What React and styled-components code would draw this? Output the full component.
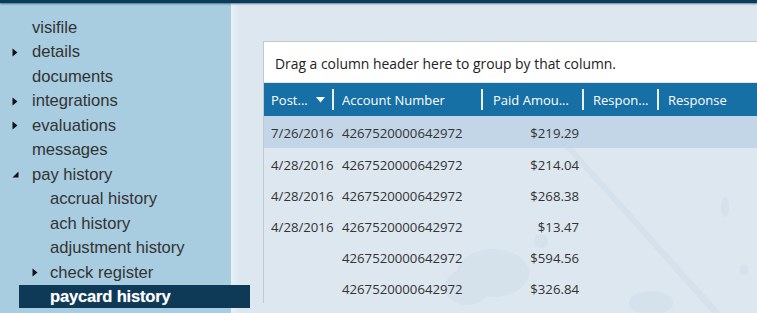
import React from "react";
import styled, { createGlobalStyle } from "styled-components";

const GlobalStyle = createGlobalStyle`
  html, body { margin: 0; padding: 0; overflow: hidden; }
  body { background: #dde7f0; }
  * { box-sizing: border-box; }
`;

const Page = styled.div`
  width: 757px;
  height: 313px;
  display: flex;
  flex-direction: column;
  overflow: hidden;
  position: relative;
`;

const TopBar = styled.div`
  height: 3px;
  flex: none;
  background: #0c3a5a;
  box-shadow: 0 1px 2px rgba(10, 40, 70, 0.55);
  position: relative;
  z-index: 2;
`;

const Body = styled.div`
  flex: 1;
  display: flex;
  min-height: 0;
`;

const Sidebar = styled.nav`
  width: 231px;
  flex: none;
  background: #a8cce0;
  padding-top: 12.5px;
  position: relative;
  z-index: 1;
  font-family: "Liberation Sans", Arial, sans-serif;
  font-size: 16.6px;
  color: #333;
`;

const Item = styled.div`
  height: 24.5px;
  display: flex;
  align-items: center;
  padding-left: ${(p) => (p.$level ? 32 : 12)}px;
  white-space: nowrap;
`;

const SelectedItem = styled(Item)`
  margin-left: 19px;
  width: 231px;
  padding-left: 13px;
  background: #0e3a57;
  color: #fff;
  font-weight: bold;
  text-shadow: 0 0 1px rgba(255, 255, 255, 0.4);
  height: 23px;
  margin-top: 0px;
  letter-spacing: -0.2px;
`;

const Toggle = styled.span`
  width: ${(p) => (p.$level ? 18 : 20)}px;
  flex: none;
  display: flex;
  align-items: center;
`;

const Main = styled.main`
  flex: 1;
  position: relative;
  padding: 38px 0 0 32px;
  background: linear-gradient(to right, #e9f0f6 0px, #dde7f0 9px, #dde7f0 100%);
  min-width: 0;
`;

const Watermark = styled.svg`
  position: absolute;
  left: 0;
  top: 0;
  width: 526px;
  height: 310px;
  pointer-events: none;
`;

const Grid = styled.div`
  position: relative;
  width: 520px;
  border-left: 1px solid #c6c9cc;
  border-top: 1px solid #c6c9cc;
  font-family: "Open Sans", "Segoe UI", sans-serif;
`;

const GroupPanel = styled.div`
  height: 41px;
  background: #fff;
  border-bottom: 1px solid #e4e4e4;
  display: flex;
  align-items: center;
  padding: 2px 0 0 11px;
  font-size: 13.9px;
  color: #222;
`;

const HeaderRow = styled.div`
  height: 33px;
  background: #166fa5;
  display: flex;
  color: #fff;
  font-size: 13px;
  padding-top: 1px;
`;

const HeaderCell = styled.div`
  position: relative;
  width: ${(p) => p.$w}px;
  flex: none;
  display: flex;
  align-items: center;
  padding-left: ${(p) => p.$pl}px;
  white-space: nowrap;
  overflow: hidden;
  &::before {
    content: "";
    display: ${(p) => (p.$first ? "none" : "block")};
    position: absolute;
    left: 0;
    top: 5px;
    bottom: 6px;
    width: 1.5px;
    background: rgba(255, 255, 255, 0.9);
  }
`;

const SortArrow = styled.svg`
  margin-left: 8px;
  flex: none;
`;

const Row = styled.div`
  height: ${(p) => (p.$selected ? 32 : 31)}px;
  display: flex;
  align-items: center;
  padding-top: 2px;
  background: ${(p) => (p.$selected ? "#c3d6e8" : "transparent")};
  font-size: 13.2px;
  color: #333;
  position: relative;
`;

const Cell = styled.div`
  width: ${(p) => p.$w}px;
  flex: none;
  padding-left: ${(p) => p.$pl || 0}px;
  padding-right: ${(p) => p.$pr || 0}px;
  text-align: ${(p) => p.$align || "left"};
  white-space: nowrap;
`;

const RightTri = () => (
  <svg width="6" height="9" viewBox="0 0 6 9">
    <path d="M0.5 0.5 L5.5 4.5 L0.5 8.5 Z" fill="#111" />
  </svg>
);

const DownTri = () => (
  <svg width="7" height="7" viewBox="0 0 7 7">
    <path d="M6.5 0.5 L6.5 6.5 L0.5 6.5 Z" fill="#111" />
  </svg>
);

const nav = [
  { label: "visifile", level: 0 },
  { label: "details", level: 0, toggle: "closed" },
  { label: "documents", level: 0 },
  { label: "integrations", level: 0, toggle: "closed" },
  { label: "evaluations", level: 0, toggle: "closed" },
  { label: "messages", level: 0 },
  { label: "pay history", level: 0, toggle: "open" },
  { label: "accrual history", level: 1 },
  { label: "ach history", level: 1 },
  { label: "adjustment history", level: 1 },
  { label: "check register", level: 1, toggle: "closed" },
  { label: "paycard history", level: 1, selected: true },
];

const cols = [
  { w: 68, pl: 7, label: "Post...", sort: true },
  { w: 149, pl: 10, label: "Account Number" },
  { w: 101, pl: 12, label: "Paid Amou..." },
  { w: 75, pl: 11, label: "Respon..." },
  { w: 127, pl: 11, label: "Response" },
];

const rows = [
  { date: "7/26/2016", acct: "4267520000642972", amt: "$219.29", selected: true },
  { date: "4/28/2016", acct: "4267520000642972", amt: "$214.04" },
  { date: "4/28/2016", acct: "4267520000642972", amt: "$268.38" },
  { date: "4/28/2016", acct: "4267520000642972", amt: "$13.47" },
  { date: "", acct: "4267520000642972", amt: "$594.56" },
  { date: "", acct: "4267520000642972", amt: "$326.84" },
];

export default function App() {
  return (
    <Page>
      <GlobalStyle />
      <TopBar />
      <Body>
        <Sidebar>
          {nav.map((n) => {
            const C = n.selected ? SelectedItem : Item;
            return (
              <C key={n.label} $level={n.level}>
                <Toggle $level={n.level}>
                  {n.toggle === "closed" && <RightTri />}
                  {n.toggle === "open" && <DownTri />}
                </Toggle>
                {n.label}
              </C>
            );
          })}
        </Sidebar>
        <Main>
          <Watermark viewBox="0 0 526 310">
            <g fill="#d3e0eb" opacity="0.7">
              <path d="M330 140 L337 140 L490 310 L481 310 Z" />
              <ellipse cx="262" cy="270" rx="36" ry="24" />
              <ellipse cx="236" cy="284" rx="22" ry="18" />
              <circle cx="310" cy="238" r="7" />
              <ellipse cx="494" cy="204" rx="4" ry="10" />
              <circle cx="513" cy="267" r="5" />
              <ellipse cx="420" cy="300" rx="22" ry="12" />
            </g>
          </Watermark>
          <Grid>
            <GroupPanel>Drag a column header here to group by that column.</GroupPanel>
            <HeaderRow>
              {cols.map((c, i) => (
                <HeaderCell key={c.label} $w={c.w} $pl={c.pl} $first={i === 0}>
                  {c.label}
                  {c.sort && (
                    <SortArrow width="9" height="6" viewBox="0 0 9 6">
                      <path d="M0 0 L9 0 L4.5 5.5 Z" fill="#fff" />
                    </SortArrow>
                  )}
                </HeaderCell>
              ))}
            </HeaderRow>
            {rows.map((r, i) => (
              <Row key={i} $selected={r.selected}>
                <Cell $w={68} $pl={7}>{r.date}</Cell>
                <Cell $w={149} $pl={10}>{r.acct}</Cell>
                <Cell $w={101} $pr={3} $align="right">{r.amt}</Cell>
                <Cell $w={75} />
                <Cell $w={127} />
              </Row>
            ))}
          </Grid>
        </Main>
      </Body>
    </Page>
  );
}
